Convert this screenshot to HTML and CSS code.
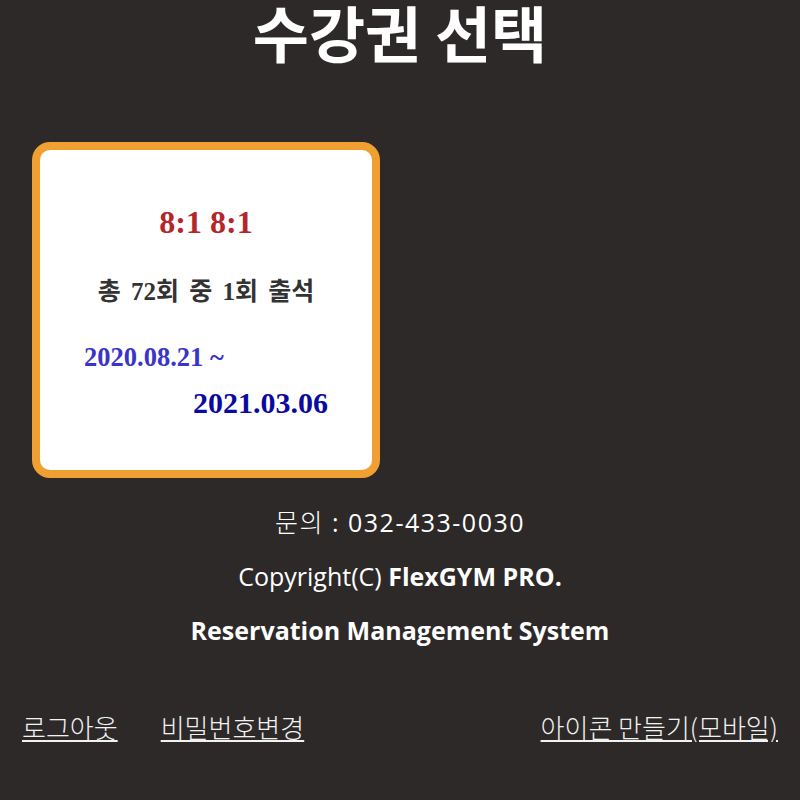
FILE: index.html
```html
<!DOCTYPE html>
<html>
<head>
	<meta charset="utf-8">
	<title>수강권 선택</title>
	<link rel="stylesheet" href="styles.css">
</head>
<body>
	<div class="page">
		<h1 class="title">수강권 선택</h1>

		<div class="tickets">
			<div class="ticket">
				<div class="ticket-name">8:1 8:1</div>
				<div class="ticket-count">총 72회 중 1회 출석</div>
				<div class="ticket-period">
					<div class="date-start">2020.08.21 ~</div>
					<div class="date-end">2021.03.06</div>
				</div>
			</div>
		</div>

		<div class="info">
			<p class="phone"><span class="ko">문의</span> : 032-433-0030</p>
			<p>Copyright(C) <b>FlexGYM PRO.</b></p>
			<p><b>Reservation Management System</b></p>
		</div>

		<div class="links">
			<div class="links-left">
				<a href="#">로그아웃</a>
				<a href="#">비밀번호변경</a>
			</div>
			<a href="#">아이콘 만들기(모바일)</a>
		</div>
	</div>
</body>
</html>
```

FILE: styles.css
```css
body {
	margin: 0;
	padding: 0;
	background-color: #2d2928;
	color: #fff;
	font-family: "Noto Sans CJK KR", "Noto Sans", sans-serif;
}
.page {
	padding: 0 22px;
}
.title {
	margin: 0;
	font-size: 61px;
	line-height: 64px;
	font-weight: bold;
	text-align: center;
}
.tickets {
	display: flex;
	margin-top: 78px;
	padding-left: 10px;
}
.ticket {
	width: 332px;
	height: 320px;
	border: 8px solid #f0a032;
	border-radius: 18px;
	background-color: #fff;
	font-family: "Liberation Serif", "Noto Sans CJK KR", serif;
	font-weight: bold;
	text-align: center;
}
.ticket-name {
	margin-top: 52px;
	font-size: 32px;
	line-height: 40px;
	color: #b3262a;
}
.ticket-count {
	margin-top: 35px;
	font-size: 25px;
	line-height: 30px;
	word-spacing: 4px;
	color: #333;
}
.ticket-period {
	padding: 0 44px;
}
.date-start {
	margin-top: 35px;
	font-size: 26.5px;
	line-height: 30px;
	text-align: left;
	color: #3a34c8;
}
.date-end {
	margin-top: 13px;
	font-size: 30px;
	line-height: 36px;
	text-align: right;
	color: #0b0aa0;
}
.info {
	margin-top: 17px;
	text-align: center;
	font-family: "Open Sans", "Noto Sans CJK KR", sans-serif;
	font-size: 25px;
}
.info p {
	margin: 0;
	line-height: 54px;
}
.info .phone {
	letter-spacing: 1.5px;
}
.info .ko {
	font-weight: 300;
}
.info b {
	font-weight: bold;
}
.links {
	display: flex;
	justify-content: space-between;
	margin-top: 55px;
	font-size: 26px;
	line-height: 30px;
	font-weight: 300;
}
.links-left {
	display: flex;
	gap: 43px;
}
.links a {
	color: #f2f2f2;
}
```
